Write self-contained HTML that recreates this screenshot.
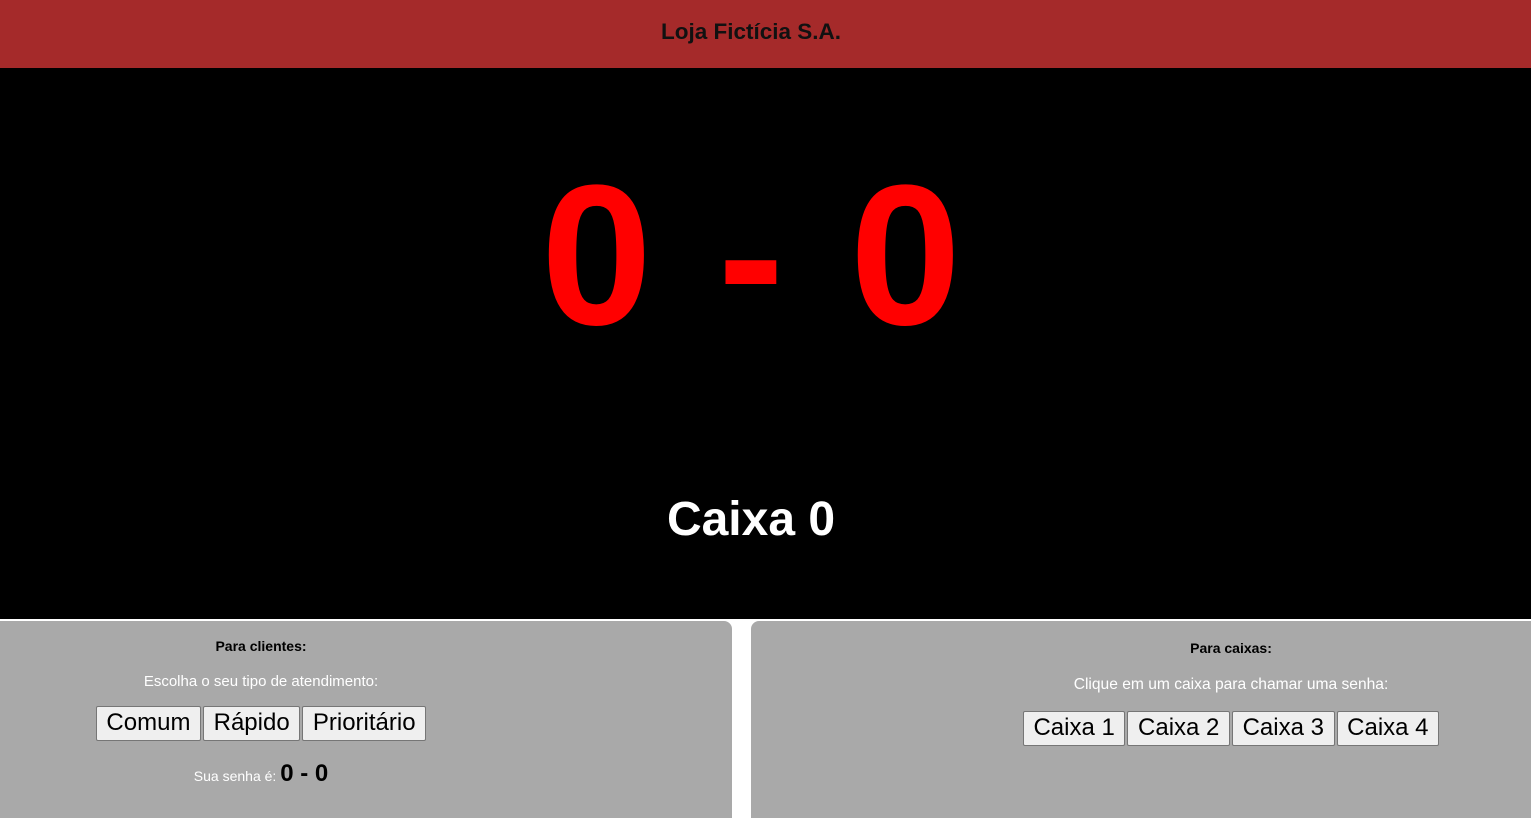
<!DOCTYPE html>
<html><head><meta charset="utf-8"><style>
*{margin:0;padding:0;box-sizing:border-box}
body{width:1531px;height:818px;background:#fff;position:relative;overflow:hidden;font-family:"Liberation Sans",sans-serif}
.hdr{position:absolute;left:0;top:0;width:1531px;height:68px;background:#a52a2a}
.hdrt{position:absolute;left:0;top:0;width:1502px;text-align:center;font-weight:bold;font-size:22.5px;line-height:64px;color:#111}
.blk{position:absolute;left:0;top:68px;width:1531px;height:551px;background:#000}
.big{position:absolute;left:0;width:1502px;text-align:center;top:156px;font-size:200px;font-weight:bold;color:#f00;line-height:200px;white-space:pre;letter-spacing:5px;text-indent:5px}
.cx{position:absolute;left:0;width:1502px;text-align:center;top:490px;font-size:48px;font-weight:bold;color:#fff;line-height:60px}
.p{position:absolute;top:621px;height:197px;background:#a9a9a9}
.t{position:absolute;text-align:center;white-space:nowrap}
.btn{display:inline-block;background:#efefef;border:1px solid #767676;border-radius:2px;font-size:24px;color:#000;height:35px;line-height:32px;padding:0 9.6px;margin:0 1px}
</style></head><body>
<div class="hdr"></div>
<div class="hdrt">Loja Fictícia S.A.</div>
<div class="blk"></div>
<div class="big">0 - 0</div>
<div class="cx">Caixa 0</div>
<div class="p" style="left:0;width:732px;border-top-right-radius:8px"></div>
<div class="p" style="left:751px;width:780px;border-top-left-radius:8px"></div>
<div class="t" style="left:61px;width:400px;top:638px;font-size:14px;font-weight:bold">Para clientes:</div>
<div class="t" style="left:61px;width:400px;top:673px;font-size:15px;color:#fff">Escolha o seu tipo de atendimento:</div>
<div class="t" style="left:61px;width:400px;top:706px"><span class="btn">Comum</span><span class="btn">Rápido</span><span class="btn">Prioritário</span></div>
<div class="t" style="left:61px;width:400px;top:760px;font-size:14px;color:#fff">Sua senha é: <b style="font-size:24px;color:#000">0 - 0</b></div>
<div class="t" style="left:1031px;width:400px;top:640px;font-size:14px;font-weight:bold">Para caixas:</div>
<div class="t" style="left:1031px;width:400px;top:676px;font-size:15.6px;color:#fff">Clique em um caixa para chamar uma senha:</div>
<div class="t" style="left:981px;width:500px;top:711px"><span class="btn">Caixa 1</span><span class="btn">Caixa 2</span><span class="btn">Caixa 3</span><span class="btn">Caixa 4</span></div>
</body></html>
